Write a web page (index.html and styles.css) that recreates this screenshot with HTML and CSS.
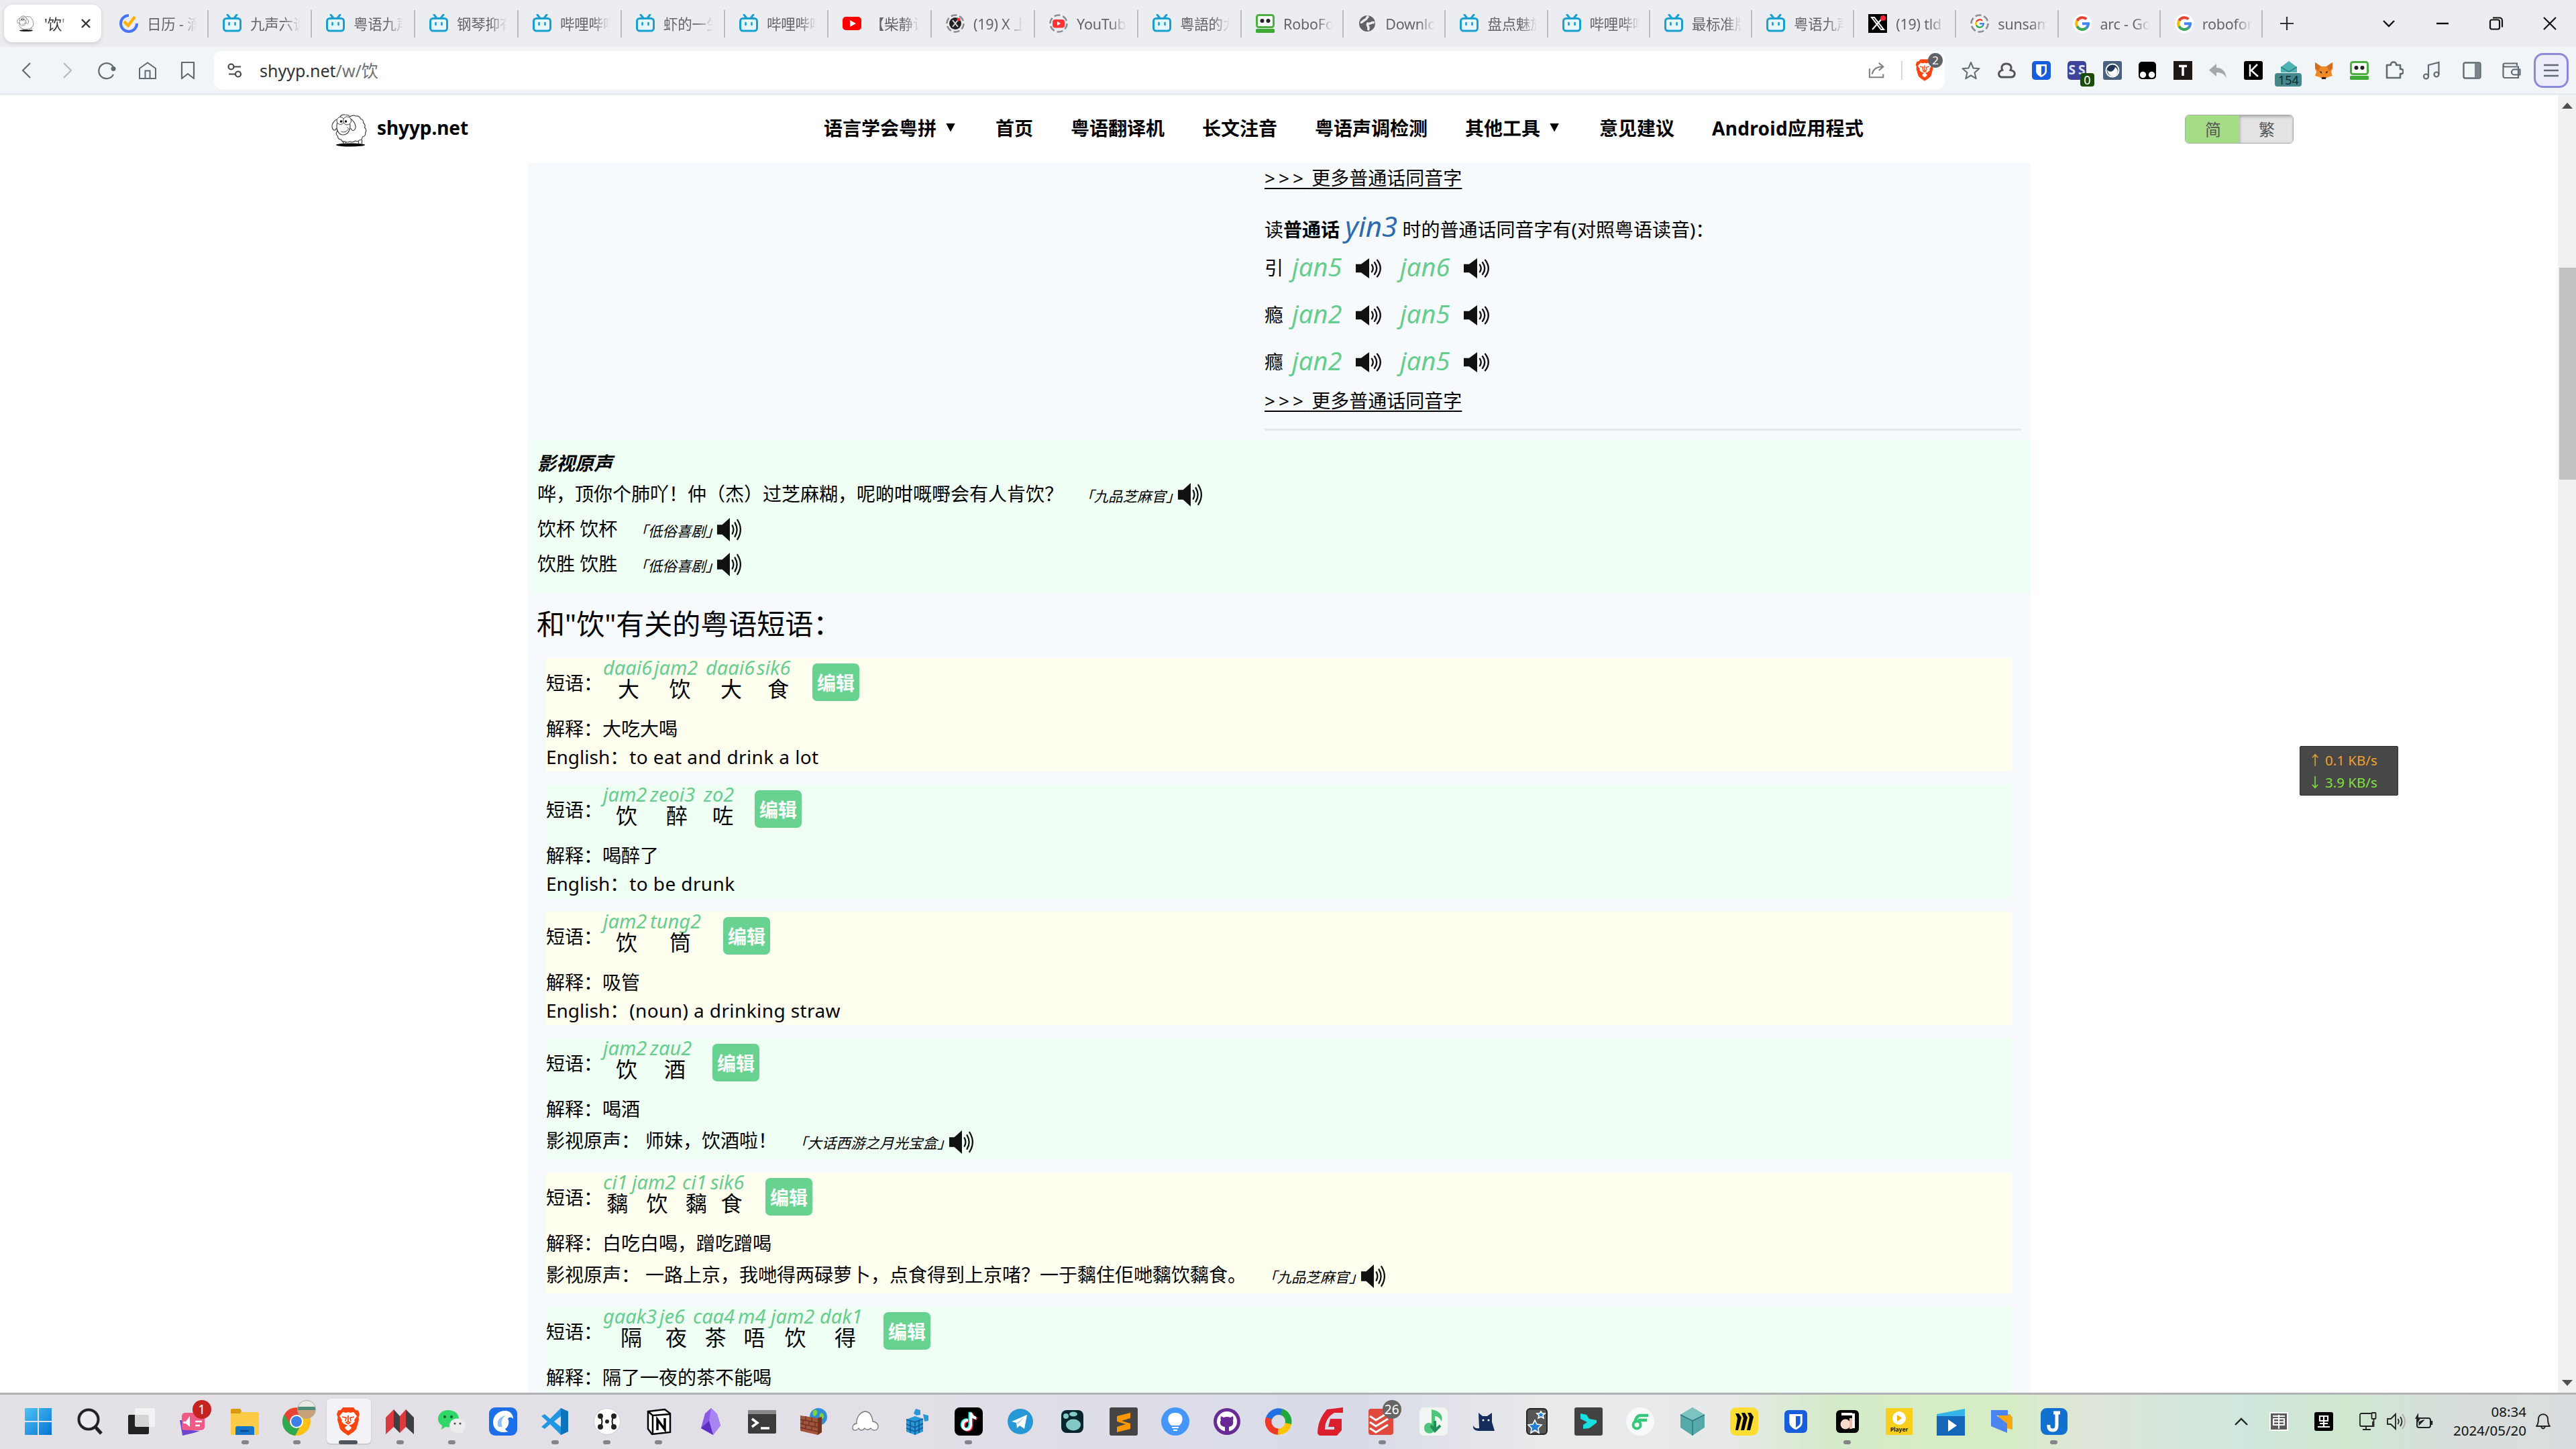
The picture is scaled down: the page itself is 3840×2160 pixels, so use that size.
FILE: index.html
```html
<!DOCTYPE html>
<html lang="zh-CN">
<head>
<meta charset="utf-8">
<title>'饮' - shyyp.net</title>
<link rel="stylesheet" href="styles.css">
</head>
<body>
<svg class="defs" aria-hidden="true">
  <symbol id="bili" viewBox="0 0 28 28"><path d="M7 1l4 5M21 1l-4 5" stroke="#1a9fd1" stroke-width="3" stroke-linecap="round"/><rect x="1.5" y="6.500" width="25" height="18.500" rx="4" fill="#e6f6fd" stroke="#1a9fd1" stroke-width="3"/><path d="M9.500 13v3M18.500 13v3" stroke="#1a9fd1" stroke-width="2.600" stroke-linecap="round"/></symbol>
  <symbol id="goog" viewBox="0 0 28 28"><circle cx="14" cy="14" r="14" fill="#fff"/><g fill="none" stroke-width="4"><path d="M6.300 10a9 9 0 0 1 14-2.500" stroke="#ea4335"/><path d="M6.200 18.300a9 9 0 0 1 .1-8.500" stroke="#fbbc05"/><path d="M20 20.800a9 9 0 0 1-13.800-2.700" stroke="#34a853"/><path d="M14 14.300h9a9 9 0 0 1-3.200 6.700" stroke="#4285f4"/></g></symbol>
  <symbol id="spk" viewBox="0 0 40 36" preserveAspectRatio="none"><path d="M1 11h8L21 1v34L9 25H1z" fill="#111"/><path d="M25 12q3.500 6 0 12M29 8q6.500 10 0 20M33 4q9.500 14 0 28" fill="none" stroke="#111" stroke-width="2.400" stroke-linecap="round"/></symbol>
  <symbol id="robo" viewBox="0 0 28 28"><rect x="1.500" y="1.500" width="25" height="18" rx="3" fill="#fff" stroke="#4caf3f" stroke-width="3"/><circle cx="9.500" cy="10" r="3" fill="#222"/><circle cx="18.500" cy="10" r="3" fill="#222"/><rect y="22" width="28" height="6" rx="1.500" fill="#3faa36"/></symbol>
  <symbol id="lion" viewBox="0 0 36 42"><path d="M10 0h16l3 4 4 .5 2 6-1.500 4 .5 4-4 14-4 4-8 5.500-8-5.500-4-4-4-14 .5-4L1 10.500l2-6L7 4z" fill="#fb4410"/><path d="M10 7l5 1 3-1 3 1 5-1 5 6-4 6 1 2-4 4-5 1.500 4 3.500-1 2-4 3-4-3-1-2 4-3.500L12 25l-4-4 1-2-4-6z" fill="#fff"/><path d="M18 12v9l-3 1.500 3 2 3-2-3-1.500M9 14l6 1.500-1 5M27 14l-6 1.500 1 5" fill="none" stroke="#fb4410" stroke-width="1.800"/></symbol>
  <symbol id="sheep" viewBox="0 0 54 50"><ellipse cx="29" cy="47" rx="21.500" ry="2.600" fill="#000"/><path d="M17 40l2 6M22 40v6M41 40v6M46 39v6" stroke="#444" stroke-width="1.300"/><path d="M13 6q2-5 8-4 5 0 7 3 4-3 9-1 5-1 7 4 5 2 4 6 4 3 2 7 4 4 1 8 1 5-4 6-1 5-5 5-2 3-6 1-4 3-8 1-4 2-7 0-5 1-6-3-5 0-5-5-4-3-1-7z" fill="#fff" stroke="#444" stroke-width="1.200"/><path d="M11 8C4 10 0 17 2 22c1 4 5 4 6 0M27 7c7 3 11 11 9 16-2 4-5 3-7-1" fill="#fff" stroke="#444" stroke-width="1.200"/><path d="M9 15c-2 9 2 17 9 17s12-8 10-17c-4-7-15-7-19 0z" fill="#fff" stroke="#444" stroke-width="1.200"/><circle cx="14" cy="11" r="5.500" fill="#fff" stroke="#444"/><circle cx="24" cy="11" r="6" fill="#fff" stroke="#444"/><circle cx="15" cy="12" r="1.800"/><circle cx="22" cy="12" r="1.800"/><path d="M15 27q6 3 10-3M24 21q3 1 3 4" fill="none" stroke="#444"/></symbol>
  <symbol id="bitw" viewBox="0 0 28 28"><rect width="28" height="28" rx="5" fill="#175ddc"/><path d="M6 5h16v10c0 4-3.500 7-8 9-4.500-2-8-5-8-9z" fill="#fff"/><path d="M14 7.500h5.500V15c0 2.800-2.500 4.700-5.500 6.300z" fill="#175ddc"/></symbol>
</svg>

<div class="screen">
<header class="tabs">
  <div class="tab active"><svg class="fav"><use href="#sheep"/></svg><span class="t">'饮'</span><svg class="x" viewBox="0 0 14 14"><path d="M1 1l12 12M13 1L1 13" stroke="#333" stroke-width="2.400"/></svg></div>
  <div class="tab"><svg class="fav" viewBox="0 0 28 28"><path d="M14 2a12 12 0 1 0 12 12" fill="none" stroke="#4772fa" stroke-width="4"/><path d="M7 11l6 6L23 4" fill="none" stroke="#ffb000" stroke-width="4.500"/></svg><span class="t">日历 - 滴</span></div>
  <div class="tab"><svg class="fav"><use href="#bili"/></svg><span class="t">九声六调</span></div>
  <div class="tab"><svg class="fav"><use href="#bili"/></svg><span class="t">粤语九声</span></div>
  <div class="tab"><svg class="fav"><use href="#bili"/></svg><span class="t">钢琴抑有</span></div>
  <div class="tab"><svg class="fav"><use href="#bili"/></svg><span class="t">哔哩哔哩</span></div>
  <div class="tab"><svg class="fav"><use href="#bili"/></svg><span class="t">虾的一生</span></div>
  <div class="tab"><svg class="fav"><use href="#bili"/></svg><span class="t">哔哩哔哩</span></div>
  <div class="tab"><svg class="fav" viewBox="0 0 28 28"><rect y="4" width="28" height="20" rx="5" fill="#f00"/><path d="M11 9l9 5-9 5z" fill="#fff"/></svg><span class="t">【柴静访</span></div>
  <div class="tab"><svg class="fav" viewBox="0 0 28 28"><circle cx="14" cy="14" r="12.500" fill="none" stroke="#8a8d91" stroke-width="2.500" stroke-dasharray="9 4"/><circle cx="14" cy="14" r="9" fill="#222"/><path d="M10 9l8 10M18 9l-8 10" stroke="#ddd" stroke-width="2"/><circle cx="19" cy="8" r="2.500" fill="#f33"/></svg><span class="t">(19) X 上</span></div>
  <div class="tab"><svg class="fav" viewBox="0 0 28 28"><circle cx="14" cy="14" r="12.500" fill="none" stroke="#8a8d91" stroke-width="2.500" stroke-dasharray="9 4"/><rect x="5" y="8" width="18" height="12.500" rx="4" fill="#f33"/><path d="M12 11l5 3-5 3z" fill="#fff"/></svg><span class="t">YouTub</span></div>
  <div class="tab"><svg class="fav"><use href="#bili"/></svg><span class="t">粵語的九</span></div>
  <div class="tab n"><svg class="fav"><use href="#robo"/></svg><span class="t">RoboFo</span></div>
  <div class="tab n"><svg class="fav" viewBox="0 0 28 28"><circle cx="14" cy="14" r="12" fill="#5f6368"/><path d="M16 3c-4 3-2 5-6 6-3 1-2 4-6 3M25 13c-5-2-6 3-10 1-3 3 4 5 0 10" fill="none" stroke="#ebedf0" stroke-width="3.500"/></svg><span class="t">Downlo</span></div>
  <div class="tab n"><svg class="fav"><use href="#bili"/></svg><span class="t">盘点魅族</span></div>
  <div class="tab n"><svg class="fav"><use href="#bili"/></svg><span class="t">哔哩哔哩</span></div>
  <div class="tab n"><svg class="fav"><use href="#bili"/></svg><span class="t">最标准版</span></div>
  <div class="tab n"><svg class="fav"><use href="#bili"/></svg><span class="t">粤语九声</span></div>
  <div class="tab n"><svg class="fav" viewBox="0 0 28 28"><path d="M0 0h28v28H0z"/><path d="M5 5h4l14 18h-4zM22 5L6 23" fill="none" stroke="#fff" stroke-width="2"/><circle cx="22" cy="6" r="4" fill="#f23"/></svg><span class="t">(19) tld</span></div>
  <div class="tab n"><svg class="fav" viewBox="0 0 28 28"><circle cx="14" cy="14" r="12.500" fill="none" stroke="#8a8d91" stroke-width="2.500" stroke-dasharray="9 4"/><svg x="5" y="5" width="18" height="18"><use href="#goog"/></svg></svg><span class="t">sunsam</span></div>
  <div class="tab n"><svg class="fav"><use href="#goog"/></svg><span class="t">arc - Go</span></div>
  <div class="tab n"><svg class="fav"><use href="#goog"/></svg><span class="t">robofor</span></div>
  <svg class="plus" viewBox="0 0 22 22"><path d="M11 1v20M1 11h20" stroke="#333" stroke-width="2.200"/></svg>
  <div class="winctl">
    <svg viewBox="0 0 24 24"><path d="M4 8l8 8 8-8" fill="none" stroke="#111" stroke-width="2.400"/></svg>
    <svg viewBox="0 0 24 24"><path d="M3 12h18" stroke="#000" stroke-width="2.400"/></svg>
    <svg viewBox="0 0 24 24"><rect x="3" y="6.500" width="14" height="14" rx="2.500" fill="none" stroke="#111" stroke-width="2.200"/><path d="M7 3.500h10a4 4 0 0 1 4 4v10" fill="none" stroke="#111" stroke-width="2.200"/></svg>
    <svg viewBox="0 0 24 24"><path d="M3 3l18 18M21 3L3 21" stroke="#111" stroke-width="2.200"/></svg>
  </div>
</header>

<div class="toolbar">
  <div class="nav5">
    <svg viewBox="0 0 28 28"><path d="M19 3L8 14l11 11" fill="none" stroke="#5f6b72" stroke-width="2.200"/></svg>
    <svg viewBox="0 0 28 28"><path d="M9 3l11 11L9 25" fill="none" stroke="#b3bbc0" stroke-width="2.200"/></svg>
    <svg viewBox="0 0 28 28"><path d="M24 12A11.500 11.500 0 1 0 23 20" fill="none" stroke="#5f6b72" stroke-width="2.200"/><circle cx="23" cy="11.500" r="3.500" fill="#5f6b72"/></svg>
    <svg viewBox="0 0 28 28"><path d="M2 11L14 2.500 26 11v15H2zM10.500 26V14.500h7V26" fill="none" stroke="#5f6b72" stroke-width="2"/></svg>
    <svg viewBox="0 0 28 28"><path d="M5 2h18v24l-9-7-9 7z" fill="none" stroke="#5f6b72" stroke-width="2.200" stroke-linejoin="round"/></svg>
  </div>
  <div class="url">
    <svg class="tune" viewBox="0 0 24 24"><g fill="none" stroke="#444" stroke-width="2.200"><circle cx="6.500" cy="6.500" r="4"/><path d="M10.500 6.500H21M3 17.500h9"/><circle cx="17" cy="17.500" r="4"/></g></svg>
    <span class="addr">shyyp.net<i>/w/饮</i></span>
    <svg class="share" viewBox="0 0 28 28"><path d="M2 11v14h22v-5M6 20C8 11 14 8 22 8M17 2l7 6-7 6" fill="none" stroke="#7a7f84" stroke-width="2.200"/></svg>
    <span class="vsep"></span>
    <span class="shield"><svg viewBox="0 0 36 42"><use href="#lion"/></svg><b>2</b></span>
  </div>
  <div class="exts">
    <div><svg viewBox="0 0 28 28"><path d="M14 2l3.500 8.500 9 .7-7 6 2.200 9L14 21.300 6.300 26.200l2.200-9-7-6 9-.7z" fill="none" stroke="#5f6b72" stroke-width="2" stroke-linejoin="round"/></svg></div>
    <div><svg viewBox="0 0 28 28"><path d="M6 24a5 5 0 0 1-1-9c1-1 2-1 3-1.500C5 8 9 4 14 4s9 4 6 9.500c5 1 7 3.500 6 7-1 3-3 3.500-5 3.500z" fill="none" stroke="#555" stroke-width="3"/></svg></div>
    <div><svg><use href="#bitw"/></svg></div>
    <div><svg viewBox="0 0 28 28"><rect width="28" height="28" rx="5" fill="#3f449b"/><text x="14" y="20" font-size="19" font-weight="bold" text-anchor="middle" fill="#e4e6ff" textLength="25">SS</text></svg><b class="bg0">0</b></div>
    <div><svg viewBox="0 0 28 28"><rect width="28" height="28" rx="3" fill="#49607f"/><circle cx="14" cy="14" r="9.500" fill="#1f3554" stroke="#fff" stroke-width="2"/><path d="M6 13c4 5 10 3 12-4 5 3 5 9 1 12-5 4-12 0-13-8z" fill="#fff"/></svg></div>
    <div><svg viewBox="0 0 28 28"><rect x="1" y="1" width="26" height="26" rx="5"/><circle cx="7.500" cy="20.500" r="4.700" fill="#fff"/><circle cx="20.500" cy="20.500" r="4.700" fill="#fff"/></svg></div>
    <div><svg viewBox="0 0 28 28"><rect width="28" height="28" fill="#1c1917"/><path d="M8 7.500h12M14 6v16" fill="none" stroke="#fff" stroke-width="3.500"/></svg></div>
    <div><svg viewBox="0 0 28 28"><path d="M12 4v6c9 0 14 6 15 16-3-7-8-9-15-9v6L1 13.500z" fill="#a5a8ab"/></svg></div>
    <div><svg viewBox="0 0 28 28"><rect width="28" height="28" rx="3"/><path d="M9 5v18M20 5l-9 9 10 9" fill="none" stroke="#fff" stroke-width="2.500"/></svg></div>
    <div><svg viewBox="0 0 28 28"><path d="M2 9L14 0l12 9v8H2z" fill="#4fb3b3"/><path d="M2 9l12 7 12-7" fill="none" stroke="#2c7f80" stroke-width="1.500"/></svg><b class="bg154">154</b></div>
    <div><svg viewBox="0 0 28 28"><path d="M1 2l9 6h8l9-6v9l-2 5 2 6-7 2-4 3h-4l-4-3-7-2 2-6-2-5z" fill="#f08a24"/><path d="M1 2l9 6-4 7-5-4zM27 2l-9 6 4 7 5-4z" fill="#d36e1f"/><path d="M7 15l4 1 0 3zM21 15l-4 1v3zM11 24h6v3h-6z" fill="#222"/></svg></div>
    <div><svg><use href="#robo"/></svg></div>
    <div><svg viewBox="0 0 28 28"><path d="M3 6h6c-1-6 9-6 8 0h6v6c6-1 6 8 0 7v6H3z" fill="none" stroke="#5f6b72" stroke-width="2.600" stroke-linejoin="round"/></svg></div>
  </div>
  <div class="tools">
    <div><svg viewBox="0 0 28 28"><g fill="none" stroke="#5f6b72" stroke-width="2.200"><circle cx="5.500" cy="23" r="3.500"/><circle cx="21" cy="20" r="3.500"/><path d="M9 23V6l15.500-4v18"/></g></svg></div>
    <div><svg viewBox="0 0 28 28"><rect x="1.500" y="2.500" width="25" height="23" rx="2.500" fill="none" stroke="#5f6b72" stroke-width="2.400"/><path d="M18 3h8v22h-8z" fill="#7a858b"/></svg></div>
    <div><svg viewBox="0 0 28 28"><g fill="none" stroke="#5f6b72" stroke-width="2.200"><path d="M22 7V3.500H4a2.500 2.500 0 0 0 0 5h20V25H4a2.500 2.500 0 0 1-2.500-2.500V6"/><path d="M26.500 12.500H18a4 4 0 0 0 0 8h8.500z"/></g></svg></div>
    <div class="menu"><svg viewBox="0 0 28 28"><path d="M3 6h22M3 14h22M3 22h22" stroke="#5f6b72" stroke-width="2.400"/></svg></div>
  </div>
</div>

<div class="view">
  <div class="page">
    <div class="site">
      <div class="brand"><svg><use href="#sheep"/></svg>shyyp.net</div>
      <nav><a>语言学会粤拼<s></s></a><a>首页</a><a>粤语翻译机</a><a>长文注音</a><a>粤语声调检测</a><a>其他工具<s></s></a><a>意见建议</a><a class="wide">Android应用程式</a></nav>
      <div class="toggle"><span class="on">简</span><span>繁</span></div>
    </div>
    <main>
      <section class="homo">
        <p class="more m1"><u><span class="arr">&gt;&gt;&gt;</span> 更多普通话同音字</u></p>
        <p class="lead">读<b>普通话</b> <em>yin3</em> 时的普通话同音字有(对照粤语读音)：</p>
        <p class="read">引<em>jan5</em><svg><use href="#spk"/></svg><em>jan6</em><svg><use href="#spk"/></svg></p>
        <p class="read">瘾<em>jan2</em><svg><use href="#spk"/></svg><em>jan5</em><svg><use href="#spk"/></svg></p>
        <p class="read">癮<em>jan2</em><svg><use href="#spk"/></svg><em>jan5</em><svg><use href="#spk"/></svg></p>
        <p class="more m2"><u><span class="arr">&gt;&gt;&gt;</span> 更多普通话同音字</u></p>
      </section>
      <section class="film">
        <h4>影视原声</h4>
        <p class="clip"><span>哗，顶你个肺吖！仲（杰）过芝麻糊，呢啲咁嘅嘢会有人肯饮？</span><cite>「九品芝麻官」</cite><svg><use href="#spk"/></svg></p>
        <p class="clip"><span>饮杯 饮杯</span><cite>「低俗喜剧」</cite><svg><use href="#spk"/></svg></p>
        <p class="clip"><span>饮胜 饮胜</span><cite>「低俗喜剧」</cite><svg><use href="#spk"/></svg></p>
      </section>
      <h2>和"饮"有关的粤语短语：</h2>
      <div class="phrases">
        <article>
          <div class="head">短语：<span class="rb" style="width:76px"><i>daai6</i>大</span><span class="rb" style="width:77px"><i>jam2</i>饮</span><span class="rb" style="width:76px"><i>daai6</i>大</span><span class="rb" style="width:64px"><i>sik6</i>食</span><button>编辑</button></div>
          <p>解释：大吃大喝</p><p>English：<span class="en">to eat and drink a lot</span></p>
        </article>
        <article>
          <div class="head">短语：<span class="rb" style="width:70px"><i>jam2</i>饮</span><span class="rb" style="width:80px"><i>zeoi3</i>醉</span><span class="rb" style="width:57px"><i>zo2</i>咗</span><button>编辑</button></div>
          <p>解释：喝醉了</p><p>English：<span class="en">to be drunk</span></p>
        </article>
        <article>
          <div class="head">短语：<span class="rb" style="width:70px"><i>jam2</i>饮</span><span class="rb" style="width:90px"><i>tung2</i>筒</span><button>编辑</button></div>
          <p>解释：吸管</p><p>English：<span class="en">(noun) a drinking straw</span></p>
        </article>
        <article class="tall">
          <div class="head">短语：<span class="rb" style="width:70px"><i>jam2</i>饮</span><span class="rb" style="width:74px"><i>zau2</i>酒</span><button>编辑</button></div>
          <p>解释：喝酒</p><p class="clip"><span>影视原声：</span><span class="q">师妹，饮酒啦！</span><cite>「大话西游之月光宝盒」</cite><svg><use href="#spk"/></svg></p>
        </article>
        <article class="tall">
          <div class="head">短语：<span class="rb" style="width:43px"><i>ci1</i>黐</span><span class="rb" style="width:75px"><i>jam2</i>饮</span><span class="rb" style="width:42px"><i>ci1</i>黐</span><span class="rb" style="width:63px"><i>sik6</i>食</span><button>编辑</button></div>
          <p>解释：白吃白喝，蹭吃蹭喝</p><p class="clip"><span>影视原声：</span><span class="q">一路上京，我哋得两碌萝卜，点食得到上京啫？一于黐住佢哋黐饮黐食。</span><cite>「九品芝麻官」</cite><svg><use href="#spk"/></svg></p>
        </article>
        <article>
          <div class="head">短语：<span class="rb" style="width:84px"><i>gaak3</i>隔</span><span class="rb" style="width:50px"><i>je6</i>夜</span><span class="rb" style="width:67px"><i>caa4</i>茶</span><span class="rb" style="width:49px"><i>m4</i>唔</span><span class="rb" style="width:73px"><i>jam2</i>饮</span><span class="rb" style="width:76px"><i>dak1</i>得</span><button>编辑</button></div>
          <p>解释：隔了一夜的茶不能喝</p>
        </article>
      </div>
    </main>
  </div>
  <div class="scroll"><svg viewBox="0 0 16 9"><path d="M0 9l8-9 8 9z" fill="#505050"/></svg><div class="thumb"></div><svg viewBox="0 0 16 9"><path d="M0 0l8 9 8-9z" fill="#505050"/></svg></div>
</div>

<footer class="taskbar">
  <div class="apps">
    <div><svg viewBox="0 0 42 42"><defs><linearGradient id="win" x2="1" y2="1"><stop stop-color="#4cc2f5"/><stop offset="1" stop-color="#0873d0"/></linearGradient></defs><path d="M1 1h19v19H1zM22 1h19v19H22zM1 22h19v19H1zM22 22h19v19H22z" fill="url(#win)"/></svg></div>
    <div><svg viewBox="0 0 42 42"><circle cx="19" cy="18" r="14.500" fill="#eceaf0" stroke="#222" stroke-width="4"/><path d="M29 29l9 10" stroke="#222" stroke-width="5"/></svg></div>
    <div><svg viewBox="0 0 42 42"><rect x="1" y="11" width="31" height="29" rx="2" fill="#222"/><rect x="11" y="1" width="30" height="28" rx="2" fill="#f4f4f4" fill-opacity=".85"/></svg></div>
    <div><svg viewBox="0 0 42 42"><path d="M1 19l4 0 0 14 26 2-9 3-17 4z" fill="#6d45cf"/><rect x="4" y="8" width="34" height="26" rx="5" fill="#ef5a86"/><path d="M6 21h4l6-8v16l-6-5H6z" fill="#fff"/><path d="M24 21h10M24 27h7" stroke="#fff" stroke-width="2.500"/></svg><b class="badge red">1</b></div>
    <div class="run"><svg viewBox="0 0 42 42"><path d="M0 4q0-2 2-2h12l3 5h23q2 0 2 2v30q0 2-2 2H0z" fill="#fccb48"/><path d="M0 4q0-2 2-2h12l2 3-2 4H0z" fill="#d99b10"/><path d="M7 41V31q0-3 3-3h22q3 0 3 3v10z" fill="#1475c8"/><path d="M14 35h13" stroke="#0a4a8f" stroke-width="2.500"/></svg></div>
    <div class="run"><svg viewBox="0 0 42 42"><circle cx="21" cy="21" r="21" fill="#fbc116"/><path d="M21 21L2.800 10.500A21 21 0 0 0 19 42l8-15z" fill="#2da94f"/><path d="M2.800 10.500A21 21 0 0 1 39.200 11H21l-9 15z" fill="#ea4335"/><circle cx="21" cy="21" r="10" fill="#fff"/><circle cx="21" cy="21" r="8" fill="#3f7fe8"/></svg><b class="badge pic"></b></div>
    <div class="cur"><svg viewBox="0 0 36 42"><use href="#lion"/></svg></div>
    <div class="run"><svg viewBox="0 0 42 42"><path d="M0 15L12 3v26L0 40zM21 13l9-10v26l-9 9z" fill="#dd3a40"/><path d="M12 3l9 10v25l-9-9zM30 3l12 12v25L30 29z" fill="#3c3f44"/></svg></div>
    <div class="run"><svg viewBox="0 0 42 42"><path d="M16 4C7 4 1 10 1 17c0 5 3 8 6 10l-1 6 6-4c12 2 20-4 20-12S25 4 16 4z" fill="#2fd868"/><circle cx="11" cy="14" r="2" fill="#15602e"/><circle cx="21" cy="14" r="2" fill="#15602e"/><ellipse cx="30" cy="27" rx="12" ry="10.500" fill="#ededed"/><path d="M36 34l4 5-9-2z" fill="#ededed"/><circle cx="26" cy="24" r="1.600" fill="#555"/><circle cx="34" cy="24" r="1.600" fill="#555"/></svg></div>
    <div><svg viewBox="0 0 42 42"><rect width="42" height="42" rx="9" fill="#1c6fe8"/><path d="M6 22c0-10 8-17 18-17 7 0 12 5 12 12-3-3-6-3-8 0 3 5 1 12-4 15 1 2 3 4 5 4C14 40 6 32 6 22z" fill="#fff"/><path d="M14 29c-4-9 3-16 11-17-6 4-8 10-5 17z" fill="#8fc0fa"/></svg></div>
    <div class="run"><svg viewBox="0 0 42 42"><path d="M30 1l11 5v30l-11 5L14 25l-8 7-5-3 9-8-9-8 5-3 8 7zM30 13l-10 8 10 8z" fill="#2196e3" fill-rule="evenodd"/><path d="M30 1l11 5v30l-11 5z" fill="#0d74bd"/></svg></div>
    <div class="run"><svg viewBox="0 0 42 42"><circle cx="21" cy="21" r="19.500" fill="#fff" stroke="#ccc"/><g fill="#222"><circle cx="11" cy="13" r="4"/><circle cx="31" cy="13" r="4"/><circle cx="11" cy="29" r="4"/><circle cx="31" cy="29" r="4"/><circle cx="21" cy="21" r="3"/></g><path d="M11 13q5 8 0 16M31 13q-5 8 0 16" fill="none" stroke="#222" stroke-width="2"/></svg></div>
    <div class="run"><svg viewBox="0 0 42 42"><path d="M5 6l25-3 8 6v28l-27 3-6-8z" fill="#fff" stroke="#000" stroke-width="2.500"/><path d="M5 6l7 6 26-2M12 12v27" fill="none" stroke="#000" stroke-width="2.500"/><path d="M19 34V18l11 15V16" fill="none" stroke="#000" stroke-width="3.500"/></svg></div>
    <div><svg viewBox="0 0 42 42"><path d="M22 1l9 9 5 17-11 14L7 31 13 9z" fill="#8b5be8"/><path d="M22 1l-3 19 6 21L36 27 31 10z" fill="#a884f3"/><path d="M7 31l12-11 6 21z" fill="#5a2fc2"/></svg></div>
    <div><svg viewBox="0 0 42 42"><rect y="4" width="42" height="35" rx="2" fill="#3b3b3b"/><path d="M0 6q0-2 2-2h38q2 0 2 2v4H0z" fill="#888"/><path d="M6 17l8 6-8 6M19 31h13" fill="none" stroke="#fff" stroke-width="3.500"/></svg></div>
    <div><svg viewBox="0 0 42 42"><circle cx="28" cy="14" r="13" fill="#2f8fd6"/><path d="M20 5c6-5 8 3 5 6-3 4-6 2-5-6zM32 8c6 2 5 9 1 9-4-2-5-6-1-9z" fill="#7fd23f"/><path d="M1 12l26 4 6-2v23l-6 4-26-6z" fill="#a3553c"/><path d="M1 18l26 5M1 24l26 6M1 30l26 6M9 13v6M18 15v6M5 19v6M14 21v6M23 22v7M9 26v6M18 28v6" stroke="#6d3223" stroke-width="1.300"/><path d="M27 16l6-2v23l-6 4z" fill="#713524"/></svg></div>
    <div><svg viewBox="0 0 42 42"><path d="M3 33c-3-4 1-9 5-9C7 16 12 8 20 6c7 0 11 6 12 15 8 1 10 8 6 12-3 2-7 1-9-2-3 3-7 3-9 0-3 4-7 4-9 0-2 3-6 4-8 2z" fill="#fff" stroke="#777" stroke-width="1.300"/></svg></div>
    <div><svg viewBox="0 0 42 42"><path d="M5 18l13-5 12 4v19l-12 5-13-5zM19 2l7 2v7l-6 1-4-3zM30 10l8 2v8l-6 1z" fill="#2897d8"/><path d="M5 18l13 4 12-5M18 22v19M5 25l13 5 12-6M11 20v18M24 20v18M5 31l13 5 12-6" fill="none" stroke="#0d5a92" stroke-width="1.500"/></svg></div>
    <div class="run"><svg viewBox="0 0 42 42"><rect width="42" height="42" rx="8"/><g fill="none" stroke-width="4"><path d="M20 19c-10 0-10 14-2 14 4 0 6-3 6-7V8c1 5 4 7 8 8" stroke="#25f4ee" transform="translate(-1.500 -1)"/><path d="M20 19c-10 0-10 14-2 14 4 0 6-3 6-7V8c1 5 4 7 8 8" stroke="#fe2c55" transform="translate(1.500 1)"/><path d="M20 19c-10 0-10 14-2 14 4 0 6-3 6-7V8c1 5 4 7 8 8" stroke="#fff"/></g></svg></div>
    <div><svg viewBox="0 0 42 42"><circle cx="21" cy="21" r="19" fill="#2798d5"/><path d="M8 21L31 11l-4 21-7-5-4 4-1-8z" fill="#fff"/><path d="M15 23l12-8-9 10" fill="#bcd8ea"/></svg></div>
    <div><svg viewBox="0 0 42 42"><rect x="5" y="4" width="33" height="34" rx="8" fill="#06262d"/><ellipse cx="23" cy="26" rx="11" ry="8.500" fill="#85c8c8"/><ellipse cx="12" cy="13" rx="4" ry="4" fill="#85c8c8"/><ellipse cx="23" cy="10" rx="6" ry="3.500" fill="#85c8c8"/></svg></div>
    <div><svg viewBox="0 0 42 42"><rect width="42" height="42" rx="3" fill="#454545"/><path d="M31 8v8l-13 4 13 4v8L11 37v-8l13-4-13-4v-8z" fill="#ff9800"/></svg></div>
    <div><svg viewBox="0 0 42 42"><circle cx="21" cy="21" r="21" fill="#4596fa"/><path d="M21 8c-13 0-13 13-6 19h12c7-6 7-19-6-19zM16 29h10v2H16zM18 33h6v2h-6z" fill="#fff"/></svg></div>
    <div><svg viewBox="0 0 42 42"><circle cx="21" cy="21" r="20" fill="#6a2a96"/><circle cx="21" cy="21" r="15" fill="#fff"/><path d="M12 13l4 2q5-2 10 0l4-2q1 4 0 6 2 9-6 10v8h-6v-8c-8-1-8-7-6-10q-1-2 0-6z" fill="#6a2a96"/></svg></div>
    <div><svg viewBox="0 0 42 42"><g fill="none" stroke-width="9.500"><path d="M6.500 17A15 15 0 0 1 27 7.500" stroke="#2170e0"/><path d="M25 6.500a15 15 0 0 1 10 19" stroke="#23a83f"/><path d="M35.500 24a15 15 0 0 1-19 11.500" stroke="#ffc400"/><path d="M20 36A15 15 0 0 1 6.500 16" stroke="#ee3a24"/></g></svg></div>
    <div><svg viewBox="0 0 42 42"><path d="M40 0v8H27q-14 8-14 25h14v-4h-9l3-12h17v17l-7 8H5l-3-3Q2 19 16 3z" fill="#dc1f2c"/></svg></div>
    <div class="run"><svg viewBox="0 0 42 42"><rect x="1" y="2" width="37" height="39" rx="4" fill="#df4a3e"/><path d="M3 13l9 6L30 8M3 22l9 6 18-11M3 31l9 6 18-11" fill="none" stroke="#fff" stroke-width="3"/></svg><b class="badge grey">26</b></div>
    <div><svg viewBox="0 0 42 42"><rect width="42" height="42" rx="7" fill="#f2f6f3"/><path d="M18 3c10 2 18 7 15 18-3-6-7-8-10-8v17c0 12-16 11-16 1 0-8 7-9 11-7z" fill="#4fc47c"/><path d="M23 20v14M17 27l6 8 8-8" fill="none" stroke="#238e56" stroke-width="4"/></svg></div>
    <div><svg viewBox="0 0 42 42"><path d="M11 8l6 5h7l7-5v14l4 13H13q-11 0-10-8 2 5 9 4z" fill="#142c5c"/><circle cx="18" cy="19" r="1.500" fill="#fff"/><circle cx="26" cy="19" r="1.500" fill="#fff"/></svg></div>
    <div><svg viewBox="0 0 42 42"><rect x="6" y="2" width="30" height="38" rx="5" fill="#555" stroke="#222" stroke-width="2"/><path d="M18 19l3 6 7 1-5 5 1 7-6-4-6 4 1-7-5-5 7-1zM27 6l2 3h4l-3 3 1 4-4-2-4 2 1-4-3-3h4z" fill="#2380d8" stroke="#fff" stroke-width="1.600"/></svg></div>
    <div><svg viewBox="0 0 42 42"><rect width="42" height="42" rx="3" fill="#424242"/><path d="M9 9l9 2 4 6 11 2v4l-11 8-9 1v-6l6-4-10-5z" fill="#18e0e0"/></svg></div>
    <div><svg viewBox="0 0 42 42"><circle cx="21" cy="21" r="21" fill="#f8f9f9"/><path d="M33 12H21q-6 0-8 11M31 19H18" fill="none" stroke="#35c77b" stroke-width="4.500"/><circle cx="16" cy="26" r="5.500" fill="none" stroke="#35c77b" stroke-width="4"/></svg></div>
    <div><svg viewBox="0 0 42 42"><path d="M21 0l18 11v19L21 42 3 30V11z" fill="#55aaa9"/><path d="M21 0l18 11-18 9L3 11z" fill="#7cc3c1"/><path d="M3 11l18 9 18-9M21 20v22" fill="none" stroke="#2d7878" stroke-width="1.500"/></svg></div>
    <div><svg viewBox="0 0 42 42"><rect width="42" height="42" rx="9" fill="#fedd33"/><path d="M8 9h5l4 6-5 19H8l3-18zM17 8h5l4 7-5 19h-5l4-18zM26 8h5l4 6-5 20h-5l4-19z"/></svg></div>
    <div><svg class="sm"><use href="#bitw"/></svg></div>
    <div class="run"><svg viewBox="0 0 42 42"><rect x="4" y="4" width="34" height="34" rx="6"/><path d="M12 10h16M30 9v22" fill="none" stroke="#fff" stroke-width="4"/><circle cx="18" cy="25" r="7.500" fill="#f6d9cf"/><path d="M24 16h4v16h-4z" fill="#f3b8a7"/></svg></div>
    <div><svg viewBox="0 0 42 42"><path d="M1 1h40v40H1z" fill="#f8cf1c"/><circle cx="21" cy="16" r="10" fill="#fff"/><path d="M18 11l7 5-7 5z" fill="#f3b500"/><text x="21" y="36" font-size="8.500" font-weight="bold" text-anchor="middle" fill="#222">Player</text></svg></div>
    <div><svg viewBox="0 0 42 42"><path d="M0 10l42-8v12L0 20z" fill="#35b4ea"/><path d="M0 13h42v29H0z" fill="#1467b8"/><path d="M17 18l13 9-13 9z" fill="#fff"/></svg></div>
    <div><svg viewBox="0 0 42 42"><path d="M15 10h17l4 5v18l-9-2-12-14z" fill="#f7a714"/><path d="M4 4h25v8H12l16 12v14L4 28z" fill="#4b84f1"/></svg></div>
    <div class="run"><svg viewBox="0 0 42 42"><rect x="1" y="1" width="40" height="40" rx="9" fill="#1271cf"/><path d="M20 8h10M25 8v19q0 7-6 7-7 0-6-8" fill="none" stroke="#fff" stroke-width="5"/></svg></div>
  </div>
  <div class="tray">
    <svg class="up" viewBox="0 0 20 12"><path d="M1 11l9-9 9 9" fill="none" stroke="#222" stroke-width="2.400"/></svg>
    <svg class="ime" viewBox="0 0 28 28"><path d="M0 0h28v28H0z" fill="#fff"/><rect x="2" y="2" width="24" height="24" fill="#5b5b5b"/><path d="M5 6h18M6 10h16v9H6zM6 14.500h16M14 4v21" fill="none" stroke="#fff" stroke-width="1.900"/></svg>
    <svg class="ime2" viewBox="0 0 28 28"><rect width="28" height="28" rx="3"/><path d="M8 6h12v7H8zM14 6v16M5 22h18M8 17h12" fill="none" stroke="#fff" stroke-width="2.200"/></svg>
    <svg class="dev" viewBox="0 0 28 28"><g fill="none" stroke="#222" stroke-width="1.800"><path d="M19 2H4a2 2 0 0 0-2 2v15a2 2 0 0 0 2 2h17V14M11 21v5M6 26h12"/><rect x="19.500" y="1" width="6" height="9" rx="1"/><path d="M22.500 10v12"/></g></svg>
    <svg class="snd" viewBox="0 0 28 28"><g fill="none" stroke="#222" stroke-width="1.800"><path d="M1 10h5l7-7v22l-7-7H1z"/><path d="M16.500 10q2.500 4 0 8"/><path d="M20 7q5 7 0 14"/><path d="M23 3q8 11 0 22" stroke="#aaa"/></g></svg>
    <svg class="bat" viewBox="0 0 28 28"><rect x="4" y="9" width="20" height="14" rx="3" fill="none" stroke="#222" stroke-width="2"/><path d="M26 13v6" stroke="#222" stroke-width="2.500"/><path d="M6.500 20.500l9-9H13l-6.500 3zM6 1L1 10h4l-1 7 6-9H6z" fill="#222"/></svg>
    <div class="clock"><span>08:34</span><span>2024/05/20</span></div>
    <svg class="bell" viewBox="0 0 24 26"><path d="M2 20q3-3 3-11c0-9 14-9 14 0q0 8 3 11zM9 21q3 5 6 0" fill="none" stroke="#222" stroke-width="1.900" stroke-linejoin="round"/></svg>
  </div>
</footer>
<div class="net"><span class="upl"><i>↑</i>0.1 KB/s</span><span class="dnl"><i>↓</i>3.9 KB/s</span></div>
</div>
</body>
</html>
```
FILE: styles.css
```css
* { box-sizing: border-box; }
body, p, h2, h4 { margin: 0; }
body {
  width: 3840px; height: 2160px; overflow: hidden;
  font-family: "Noto Sans", "Noto Sans CJK SC", sans-serif;
  font-size: 28px; color: #000; background: #fff;
}
svg { display: block; flex: none; }
.defs { position: absolute; width: 0; height: 0; }
.screen { position: relative; display: flex; flex-direction: column; width: 3840px; height: 2160px; }

/* tab strip */
.tabs { display: flex; align-items: center; height: 70px; background: #ebedf0; flex: none; }
.tab { display: flex; align-items: center; flex: none; width: 154px; height: 41px; padding-left: 21px; border-right: 2px solid #b9bcc1; font-size: 21.500px; color: #62666b; }
.tab.n { width: 152.200px; }
.tab .t { width: 76px; margin-left: 13px; overflow: hidden; white-space: nowrap; line-height: 32px; letter-spacing: -.2px; padding-top: 1px; -webkit-mask-image: linear-gradient(90deg, #000 65%, transparent 98%); mask-image: linear-gradient(90deg, #000 65%, transparent 98%); }
.fav { width: 28px; height: 28px; }
.tab.active { width: 145px; height: 56px; margin: 0 6px; padding-left: 19px; border: 0; border-radius: 13px; background: #fff; color: #333; box-shadow: 0 2px 6px #0002; }
.tab.active .fav { width: 26px; }
.tab.active .t { width: 36px; margin-left: 15px; }
.x { width: 14px; height: 14px; margin-left: 19px; }
.plus { width: 22px; height: 22px; margin-left: 25px; }
.winctl { display: flex; margin-left: auto; padding-right: 27px; gap: 56px; }
.winctl svg { width: 24px; height: 24px; }

/* address bar row */
.toolbar { display: flex; align-items: center; height: 72px; flex: none; background: #f2f5f7; border-bottom: 3px solid #e9ebee; padding-left: 10px; }
.nav5 { display: flex; width: 309px; }
.nav5 svg { width: 60px; height: 28px; }
.url { display: flex; align-items: center; width: 2580px; height: 57px; border-radius: 12px; background: #fff; padding: 0 0 0 19px; }
.tune { width: 24px; height: 24px; }
.addr { margin-left: 25px; font-size: 25px; color: #2f3336; margin-right: auto; margin-top: -2px; }
.addr i { font-style: normal; color: #6c7175; }
.share { width: 28px; height: 26px; }
.vsep { width: 2px; height: 28px; margin: 0 19px 0 22px; background: #d5d8dc; }
.shield { position: relative; width: 44px; }
.shield svg { width: 28px; height: 33px; }
.shield b { position: absolute; left: 19px; top: -9px; width: 22px; height: 22px; border-radius: 11px; background: #5f6368; color: #fff; font: 17px/22px "Noto Sans", sans-serif; text-align: center; }
.exts { display: flex; margin-left: 13px; }
.exts div { position: relative; width: 52.600px; display: flex; justify-content: center; }
.exts svg, .tools svg { width: 28px; height: 28px; }
.exts b { position: absolute; color: #fff; font: 18px/20px "Noto Sans", sans-serif; border-radius: 4px; text-align: center; }
.bg0 { left: 31px; top: 18px; width: 21px; background: #1a4d0c; }
.exts .bg154 { left: 6px; top: 18px; width: 40px; background: #44888b; color: #10282a; }
.tools { display: flex; align-items: center; }
.tools div { width: 59.400px; display: flex; justify-content: center; }
.tools .menu { width: 52px; height: 52px; margin-left: 3px; align-items: center; border: 3px solid #8b8ad8; border-radius: 14px; background: #ececfa; }

/* page viewport */
.view { display: flex; height: 1934px; flex: none; overflow: hidden; }
.page { width: 3813px; overflow: hidden; }
.scroll { width: 27px; background: #f1f1f1; display: flex; flex-direction: column; align-items: center; padding: 11px 0 10px; }
.scroll svg { width: 16px; height: 9px; }
.thumb { width: 25px; height: 316px; margin: 237px 0 auto 2px; background: #c1c1c1; }
.site { display: flex; align-items: center; height: 101px; padding-left: 493px; }
.brand { display: flex; align-items: center; gap: 14px; width: 735px; font-weight: bold; height: 50px; margin-bottom: 5px; letter-spacing: -.1px; }
.brand svg { width: 55px; height: 50px; margin-top: 8px; }
.site nav { display: flex; gap: 56px; width: 2029px; font-weight: bold; margin-bottom: 5px; }
.site nav a { display: flex; align-items: center; }
.site nav .wide { letter-spacing: .3px; }
.site nav s { width: 14px; height: 13px; margin: 0 4px 0 14px; background: #000; clip-path: polygon(0 0, 100% 0, 50% 100%); }
.toggle { display: flex; width: 162px; height: 43px; border: 1px solid #a8a8a8; border-radius: 6px; overflow: hidden; font-size: 24px; line-height: 41px; color: #555; margin-top: -1px; }
.toggle span { flex: 1; text-align: center; padding-left: 2px; background: #e4e4e4; box-shadow: inset 1px 2px 4px #0004; }
.toggle .on { background: #a5dc86; box-shadow: none; }

main { margin-left: 787px; width: 2240px; height: 1833px; background: #f7fafc; overflow: hidden; }
.homo { height: 413px; margin-left: 1098px; width: 1128px; }
.more { height: 42px; line-height: 42px; }
.more u { text-underline-offset: 4px; text-decoration-thickness: 2px; text-decoration-skip-ink: none; }
.arr { letter-spacing: 5px; }
.m1 { padding-top: 1px; }
.m2 { padding-top: 3px; height: 69px; border-bottom: 3px solid #e2e8f0; }
.lead { height: 78px; padding-top: 26px; line-height: 62px; white-space: nowrap; }
.lead em { font-size: 42px; color: #2b6cb0; line-height: 50px; margin-left: 1px; }
.read { display: flex; align-items: center; height: 70px; }
.read em { width: 94px; margin: -3px 0 0 13px; font-size: 38px; color: #66cd8e; line-height: 50px; }
.read svg { width: 40px; height: 32px; margin: 3px 14px 0 0; }
.film { height: 227px; margin-left: 4px; padding: 13px 10px; background: #f0fff4; }
.film h4 { font-style: italic; line-height: 42px; height: 42px; }
.clip { display: flex; align-items: center; height: 52px; white-space: pre; }
.clip span { margin-top: -4px; }
.clip cite { font-size: 21.500px; margin: 3px -5px 0 24px; }
.clip svg { width: 38px; height: 37px; margin-top: 1px; }
h2 { height: 98px; padding-left: 13px; font-size: 42px; font-weight: normal; line-height: 94px; }
.phrases { display: flex; flex-direction: column; gap: 20px; padding-left: 27px; width: 2213px; }
article { height: 169px; background: #fffff0; flex: none; }
article:nth-child(even) { background: #f0fff4; }
article.tall { height: 180px; }
article p { line-height: 38px; height: 42px; }
article .clip { height: 52px; }
.q { margin-left: 8px; }
.en { letter-spacing: .4px; margin-left: 1px; }
.head { display: flex; height: 86px; align-items: flex-start; line-height: 74px; }
.rb { display: flex; flex-direction: column; align-items: center; font-size: 32px; line-height: 36px; position: relative; left: 1px; }
.rb i { align-self: flex-start; font-size: 29px; line-height: 28px; color: #66cd8e; white-space: nowrap; }
button { width: 70px; height: 56px; margin: 8px 0 0 20px; padding: 0; border: 0; border-radius: 7px; background: #68d391; color: #fff; font: bold 28px "Noto Sans CJK SC", sans-serif; }

/* network speed overlay */
.net { position: absolute; left: 3428px; top: 1112px; width: 147px; height: 74px; padding: 4px 12px; background: #474747; border: 1px solid #2f2f2f; border-radius: 2px; display: flex; flex-direction: column; font-size: 20.500px; line-height: 33px; }
.net i { display: inline-block; width: 25px; font: normal 20px "Noto Sans CJK SC", sans-serif; line-height: 20px; }
.upl { color: #f0a030; }
.dnl { color: #7fe23c; }

/* taskbar */
.taskbar { display: flex; height: 84px; border-top: 3px solid #b1b1b5; padding-left: 18.500px; background: linear-gradient(90deg, #e3e0e6 0, #e3dfe6 34%, #d9dce8 50%, #d9dce8 53%, #eaeaeb 60%, #e8e9eb 67%, #d5eac9 71%, #d6ecc4 75%, #d5ecc5 78%, #dee5d9 81%, #cfe7dc 87%, #d0e7cf 91%, #d6dedb 95%, #dadddf 100%); }
.apps { display: flex; }
.apps > div { position: relative; width: 77.050px; height: 80px; display: flex; justify-content: center; align-items: center; }
.apps svg { width: 42px; height: 42px; position: relative; z-index: 1; }
.apps .sm { width: 34px; height: 34px; }
.run::after, .cur::after { content: ""; position: absolute; bottom: 6px; width: 11px; height: 6px; border-radius: 3px; background: #85848a; }
.cur::before { content: ""; position: absolute; left: 6px; top: 6px; width: 66px; height: 67px; border-radius: 6px; background: #f3f3f7; box-shadow: 0 1px 2px #0003; }
.cur::after { width: 28px; background: #4c5560; z-index: 1; }
.badge { position: absolute; z-index: 2; left: 39px; top: 8px; width: 28px; height: 28px; border-radius: 14px; font: 19px/28px "Noto Sans", sans-serif; text-align: center; color: #fff; }
.red { background: #c32420; left: 37px; }
.grey { background: #666; }
.pic { height: 28px; background: linear-gradient(#e8ebe4 0 35%, #4d8a77 35% 55%, #c9a27a 55%); border: 1.500px solid #aaa; }
.tray { display: flex; align-items: center; margin-left: auto; padding-bottom: 2px; }
.up { width: 20px; height: 12px; margin-right: 32px; }
.ime { width: 28px; height: 28px; margin-right: 39px; }
.ime2 { width: 28px; height: 28px; margin-right: 38px; }
.dev { width: 28px; height: 28px; margin-right: 14px; }
.snd { width: 28px; height: 28px; margin-right: 12px; }
.bat { width: 30px; height: 28px; }
.clock { display: flex; flex-direction: column; width: 138px; text-align: right; font-size: 20.500px; line-height: 28px; color: #111; margin-top: -2px; }
.bell { width: 24px; height: 26px; margin: 0 37px 0 13px; }
```
